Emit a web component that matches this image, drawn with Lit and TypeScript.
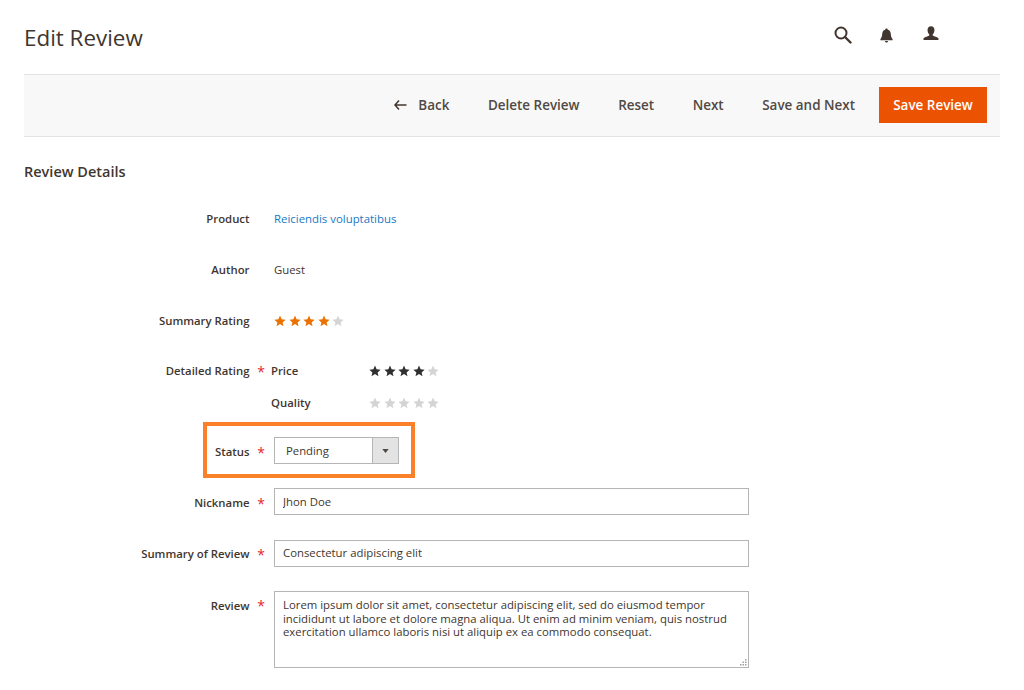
import { LitElement, html, css, svg } from "lit";
import { customElement } from "lit/decorators.js";

const STAR = svg`<path d="M6 .6l1.6 3.700 4 .4-3 2.700.9 3.900L6 8.900l-3.500 2.400.9-3.900-3-2.700 4-.4z"/>`;

@customElement("app-root")
export class AppRoot extends LitElement {
  static styles = css`
    :host { display: block; position: relative; width: 1024px; height: 690px; overflow: hidden; background: #fff;
      font-family: "Open Sans", "Noto Sans", sans-serif; color: #41362f; font-size: 12px; }
    * { box-sizing: border-box; }
    .top { height: 74px; display: flex; align-items: flex-start; padding: 0 0 0 24px; }
    h1 { margin: 22px 0 0; font-size: 22.4px; line-height: 32px; font-weight: 400; color: #41362f; flex: 1; }
    .icons { display: flex; margin: 26px 85px 0 0; align-items: flex-start; }
    .icons svg { display: block; fill: #41362f; }
    .bell { margin: 2px 30px 0 28px; }
    .bar { margin: 0 24px; height: 63px; background: #f8f8f8; border-top: 1px solid #e3e3e3; border-bottom: 1px solid #e3e3e3;
      display: flex; align-items: center; justify-content: flex-end; padding: 0 13px 2px 0; }
    .act { font-size: 13.45px; font-weight: 600; color: #514943; margin-right: 38.600px; display: flex; align-items: center; }
    .act svg { margin-right: 11px; display: block; }
    .save { width: 108px; height: 36px; background: #eb5202; color: #fff; font-size: 13.45px; font-weight: 600;
      display: flex; align-items: center; justify-content: center; margin-left: -14.600px; }
    h2 { margin: 25px 0 0 24px; font-size: 14.500px; line-height: 19px; font-weight: 600; color: #41362f; }
    .form { margin-top: 27px; }
    .row { display: grid; grid-template-columns: 249.500px 24.500px 1fr; align-items: center; }
    .label { text-align: right; font-size: 11.350px; font-weight: 600; color: #41362f; }
    .shift .label { padding-top: 2px; }
    .req { color: #e22626; font-size: 14px; font-weight: 400; text-align: right; padding-right: 9px; line-height: 14px; padding-top: 3px; }
    .shift .req { padding-top: 5px; }
    .up .label { padding-top: 0; }
    .up .req { padding-top: 3px; }
    .up input { padding-bottom: 2px; }
    .review .label { padding-top: 7px; line-height: 15px; }
    .review .req { padding-top: 8px; }
    .link { color: #1979c3; font-size: 11.400px; }
    .val { font-size: 11.350px; color: #41362f; }
    .stars { display: flex; gap: 2.600px; }
    .stars svg { display: block; }
    .orange { fill: #eb7100; } .dark { fill: #303030; } .off { fill: #d4d4d4; }
    .detail { display: grid; grid-template-columns: 98px auto; row-gap: 15px; margin-left: -3px; align-items: center; justify-content: start; }
    .detail span { font-size: 11.350px; font-weight: 600; line-height: 17px; }
    .select { width: 125px; height: 27px; display: flex; border: 1px solid #b5b5b5; background: #fff; align-items: center; }
    .select span { flex: 1; padding-left: 11px; font-size: 11.300px; color: #41362f; }
    .select i { width: 26px; height: 100%; background: #e3e3e3; border-left: 1px solid #b5b5b5; display: flex; align-items: center; justify-content: center; }
    .select svg { fill: #514943; display: block; }
    input, textarea { display: block; width: 475px; border: 1px solid #b5b5b5; background: #fff; color: #41362f; margin: 0;
      font-family: inherit; font-size: 11.350px; padding: 0 8px; border-radius: 0; outline: none; }
    input { height: 27px; }
    .area { position: relative; width: 475px; }
    textarea { height: 77px; padding: 6px 8px; line-height: 13.500px; resize: none; overflow: hidden; }
    .grip { position: absolute; right: 2px; bottom: 2px; display: block; fill: #a0a0a0; pointer-events: none; }
    .mark { position: absolute; left: 203px; top: 422px; width: 212px; height: 56px; border: 4px solid #fa8029; pointer-events: none; }
  `;

  private stars(on: number, cls: string) {
    return html`<div class="stars">${[0, 1, 2, 3, 4].map(
      (i) => html`<svg width="12" height="12" viewBox="0 0 12 12" class=${i < on ? cls : "off"}>${STAR}</svg>`
    )}</div>`;
  }

  private row(label: string, req: boolean, top: number, height: number, body: unknown, extra = "") {
    return html`<div class="row ${req ? "shift" : ""} ${extra}" style="margin-top:${top}px;height:${height}px">
      <div class="label">${label}</div><div class="req">${req ? "*" : ""}</div><div>${body}</div></div>`;
  }

  render() {
    return html`
      <div class="top">
        <h1>Edit Review</h1>
        <div class="icons">
          <svg width="18" height="18" viewBox="0 0 18 18"><circle cx="7" cy="7" r="5.500" fill="none" stroke="#41362f" stroke-width="2"/><path d="M11 11l5.500 5.500" stroke="#41362f" stroke-width="2.400" stroke-linecap="round"/></svg>
          <svg class="bell" width="13" height="15" viewBox="0 0 14 16"><path d="M7 .5c.8 0 1.300.5 1.400 1.200C10.600 2.300 11.500 4 11.600 6.200c.1 2.500.6 4.200 2 5.800v1H.4v-1c1.400-1.600 1.900-3.300 2-5.800C2.500 4 3.400 2.300 5.600 1.700 5.700 1 6.200.5 7 .5z"/><path d="M5.200 14h3.600C8.600 15 8 15.600 7 15.600S5.400 15 5.200 14z"/></svg>
          <svg width="16" height="15" viewBox="0 0 17 16"><path d="M8.500.3c2.300 0 3.700 1.600 3.700 3.900 0 1.800-.8 3.500-1.700 4.500-.4.500-.3 1.300.3 1.600 2 1 5.700 1.500 5.700 3.400V15H.5v-1.300c0-1.900 3.700-2.400 5.700-3.400.6-.3.700-1.100.3-1.600-.9-1-1.700-2.700-1.700-4.500C4.800 1.900 6.200.3 8.500.3z"/></svg>
        </div>
      </div>
      <div class="bar">
        <div class="act"><svg width="13" height="10" viewBox="0 0 13 10"><path d="M5 .5L1 5l4 4.500M1.200 5H12.500" fill="none" stroke="#41362f" stroke-width="1.500"/></svg>Back</div>
        <div class="act">Delete Review</div>
        <div class="act">Reset</div>
        <div class="act">Next</div>
        <div class="act">Save and Next</div>
        <div class="save">Save Review</div>
      </div>
      <h2>Review Details</h2>
      <div class="form">
        ${this.row("Product", false, 0, 20, html`<span class="link">Reiciendis voluptatibus</span>`)}
        ${this.row("Author", false, 31, 20, html`<span class="val">Guest</span>`)}
        ${this.row("Summary Rating", false, 31, 20, html`<div style="padding-top:1px">${this.stars(4, "orange")}</div>`)}
        <div class="row" style="margin-top:32px;align-items:start">
          <div class="label" style="line-height:17px">Detailed Rating</div><div class="req">*</div>
          <div class="detail"><span>Price</span>${this.stars(4, "dark")}<span>Quality</span>${this.stars(0, "dark")}</div>
        </div>
        ${this.row("Status", true, 26, 27, html`<div class="select"><span>Pending</span><i><svg width="7" height="4" viewBox="0 0 8 5"><path d="M0 0h8L4 5z"/></svg></i></div>`)}
        ${this.row("Nickname", true, 24, 27, html`<input value="Jhon Doe" />`)}
        ${this.row("Summary of Review", true, 24.5, 27, html`<input value="Consectetur adipiscing elit" />`, "up")}
        <div class="row review" style="margin-top:24.500px;align-items:start">
          <div class="label">Review</div><div class="req">*</div>
          <div class="area">
            <textarea>Lorem ipsum dolor sit amet, consectetur adipiscing elit, sed do eiusmod tempor incididunt ut labore et dolore magna aliqua. Ut enim ad minim veniam, quis nostrud exercitation ullamco laboris nisi ut aliquip ex ea commodo consequat.</textarea>
            <svg class="grip" width="7" height="7" viewBox="0 0 7 7"><rect x="5" y="0" width="1.500" height="1.500"/><rect x="2.500" y="2.500" width="1.500" height="1.500"/><rect x="5" y="2.500" width="1.500" height="1.500"/><rect x="0" y="5" width="1.500" height="1.500"/><rect x="2.500" y="5" width="1.500" height="1.500"/><rect x="5" y="5" width="1.500" height="1.500"/></svg>
          </div>
        </div>
      </div>
      <div class="mark"></div>
    `;
  }
}
